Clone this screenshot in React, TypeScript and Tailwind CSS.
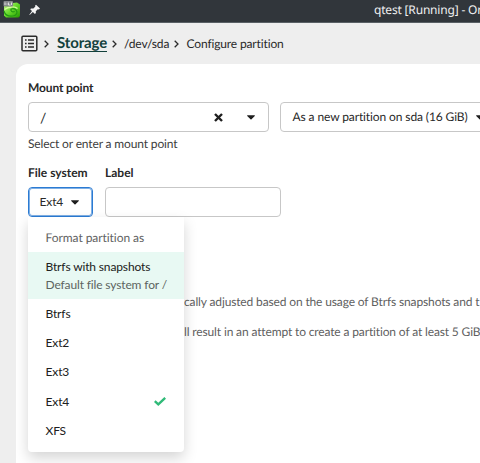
import React, { useState } from 'react';
import clsx from 'clsx';

interface FileSystem {
    name: string;
    description?: string;
}

const FILE_SYSTEMS: FileSystem[] = [
    { name: 'Btrfs with snapshots', description: 'Default file system for /' },
    { name: 'Btrfs' },
    { name: 'Ext2' },
    { name: 'Ext3' },
    { name: 'Ext4' },
    { name: 'XFS' },
];

const Caret = () => (
    <svg viewBox="0 0 8 5" className="w-2 h-[5px] shrink-0" fill="#1f1f1f">
        <path d="M0.5 0.3h7c.4 0 .6.5.3.8L4.5 4.3a.7.7 0 0 1-1 0L.2 1.1C-.1.8.1.3.5.3z" />
    </svg>
);

const Chevron = ({ className }: { className?: string }) => (
    <svg viewBox="0 0 5 8" className={clsx('w-[5px] h-2 shrink-0', className)} fill="none" stroke="#2b2b2b" strokeWidth="1.3">
        <path d="M0.7 0.7L4 4L0.7 7.3" />
    </svg>
);

const TitleBar = () => (
    <header className="h-[23px] bg-[#31363b] border-b border-[#596065] flex items-start whitespace-nowrap overflow-hidden">
        <svg viewBox="0 0 18 18" className="w-[18px] h-[18px] ml-[3px] shrink-0">
            <defs>
                <linearGradient id="gecko" x1="0" y1="0" x2="1" y2="1">
                    <stop offset="0" stopColor="#c5f58a" />
                    <stop offset="0.5" stopColor="#65d829" />
                    <stop offset="1" stopColor="#249800" />
                </linearGradient>
            </defs>
            <path d="M1 4L14 2.5L17 4.5V16L15.5 17.5H3L1 15.5Z" fill="url(#gecko)" />
            <path d="M1 11c1 4 5 5.5 9 5 4-.5 5-4 3-6s-6-1.5-5 .5 3 1.5 3.5.5" fill="none" stroke="#239a12" strokeWidth="1.2" />
            <path d="M1.5 9.5c4-3 10-3.5 13-1" fill="none" stroke="#d6ff9e" strokeWidth="1.4" />
            <rect x="0.5" y="1" width="9.5" height="5.5" rx="1" fill="#85878a" />
            <path d="M2 2.5v2.5M3.5 4h1M5.5 2.5v2.5h2M8.5 2.5v2.5" fill="none" stroke="#f3f3f3" strokeWidth="0.8" />
        </svg>
        <svg viewBox="0 0 12 12" className="w-3 h-3 ml-2 mt-[3.5px] shrink-0" fill="#f5f5f5">
            <path d="M7 0.7L11 4.5L9.9 5.5L8.8 5.2L6.8 7.2L6.9 9.1L5.9 10L3.9 8L0.7 11L0.3 10.7L3 7.1L1.2 5.3L2.1 4.4L4.4 4.5L6.4 2.5L6 1.7Z" />
        </svg>
        <span className="font-['Noto_Sans'] text-[12px] tracking-[-0.18px] leading-[20px] text-[#eff0f1] ml-[333px]">qtest [Running] - Or</span>
    </header>
);

const Breadcrumb = () => (
    <nav className="h-[41px] flex items-center pl-[21px] whitespace-nowrap">
        <svg viewBox="0 0 17 17" className="w-[17px] h-[17px] shrink-0" fill="none" stroke="#2b2b2b" strokeWidth="1.5">
            <rect x="1" y="1.3" width="14.8" height="14.4" rx="1" />
            <path d="M4 5.1h1.6M4 8.5h1.6M4 11.9h1.6M7 5.1h6M7 8.5h6M7 11.9h6" />
        </svg>
        <Chevron className="ml-[6px]" />
        <a className="w-[49.5px] text-[15px] tracking-[-0.12px] leading-[16px] font-bold text-[#12403b] border-b border-[#12403b] ml-[8px]">Storage</a>
        <Chevron className="ml-[5px]" />
        <span className="w-[45px] ml-[7.5px]">/dev/sda</span>
        <Chevron className="ml-[5px]" />
        <span className="ml-[7.5px]">Configure partition</span>
    </nav>
);

interface FileSystemMenuProps {
    selected: string;
    onSelect: (name: string) => void;
}

const FileSystemMenu: React.FC<FileSystemMenuProps> = ({ selected, onSelect }) => (
    <div className="absolute left-0 top-[30px] w-[156px] h-[235px] bg-white rounded-b-[4px] pt-[6px] shadow-[0_6px_14px_rgba(0,0,0,0.17)] z-10">
        <div className="h-[29px] pl-[17.5px] leading-[29px] tracking-[-0.06px] text-[#626262]">Format partition as</div>
        {FILE_SYSTEMS.map((fs) => (
            <button
                key={fs.name}
                onClick={() => onSelect(fs.name)}
                className={clsx(
                    'w-full pl-[17.5px] pr-[18px] flex items-center justify-between text-left',
                    fs.description ? 'h-[47px] bg-[#e8f9f3]' : 'h-[29.4px]'
                )}
            >
                <span className="leading-[18px]">
                    <span className="block text-[#202020]">{fs.name}</span>
                    {fs.description && <span className="block text-[#5c6461]">{fs.description}</span>}
                </span>
                {fs.name === selected && (
                    <svg viewBox="0 0 12 9" className="w-3 h-[9px]" fill="none" stroke="#30ba78" strokeWidth="2.4">
                        <path d="M0.8 4.2L4.3 7.3L11.2 0.9" />
                    </svg>
                )}
            </button>
        ))}
    </div>
);

export default function App() {
    const [selected, setSelected] = useState('Ext4');

    return (
        <div className="w-full h-[463px] bg-[#eeeeee] overflow-hidden flex flex-col font-['Lato','Noto_Sans',sans-serif] text-[12px] tracking-[-0.14px] [text-rendering:geometricPrecision] text-[#292929]">
            <TitleBar />
            <Breadcrumb />
            <main className="flex-1 ml-4 pl-3 pt-[15px] bg-white rounded-tl-[12px] whitespace-nowrap overflow-hidden">
                <div className="font-bold leading-[18px]">Mount point</div>
                <div className="flex gap-[11.5px] mt-[5px]">
                    <div className="w-[240.5px] h-[30px] shrink-0 border border-[#c7c7c7] rounded-[4px] flex items-center pl-[11px] pr-[13px]">
                        <span className="flex-1 text-[14px]">/</span>
                        <svg viewBox="0 0 9 9" className="w-[9px] h-[9px] mr-6" fill="none" stroke="#1f1f1f" strokeWidth="2.4">
                            <path d="M1 1L8 8M8 1L1 8" />
                        </svg>
                        <Caret />
                    </div>
                    <div className="w-[214px] h-[30px] shrink-0 border border-[#c7c7c7] rounded-[4px] flex items-center gap-[8px] pl-[11.5px] pr-[11px]">
                        <span className="w-[175px] tracking-[-0.11px]">As a new partition on sda (16 GiB)</span>
                        <Caret />
                    </div>
                </div>
                <div className="leading-[18px] mt-[3px] text-[#3d3d3d]">Select or enter a mount point</div>

                <div className="flex gap-[13px] mt-[11px]">
                    <div className="w-[64px]">
                        <div className="font-bold leading-[18px] tracking-normal">File system</div>
                        <div className="relative mt-[5px]">
                            <button className="w-[64.5px] h-[30px] border-[1.5px] border-[#2b7bd3] outline outline-1 -outline-offset-2 outline-[#2b7bd3]/60 rounded-[4px] flex items-center gap-[9px] pl-[10.5px]">
                                <span className="w-[22px] text-left">Ext4</span>
                                <Caret />
                            </button>
                            <FileSystemMenu selected={selected} onSelect={setSelected} />
                        </div>
                    </div>
                    <div>
                        <div className="font-bold leading-[18px] tracking-normal">Label</div>
                        <input className="block mt-[5px] w-[176px] h-[30px] border border-[#c7c7c7] rounded-[4px] px-3 outline-none" />
                    </div>
                </div>

                <div className="mt-[76px] pl-[156px] text-[#5f5f5f]">
                    <p className="leading-[18px]">cally adjusted based on the usage of Btrfs snapshots and t</p>
                    <p className="leading-[18px] mt-[12px]">ll result in an attempt to create a partition of at least 5 GiB</p>
                </div>
            </main>
        </div>
    );
}
